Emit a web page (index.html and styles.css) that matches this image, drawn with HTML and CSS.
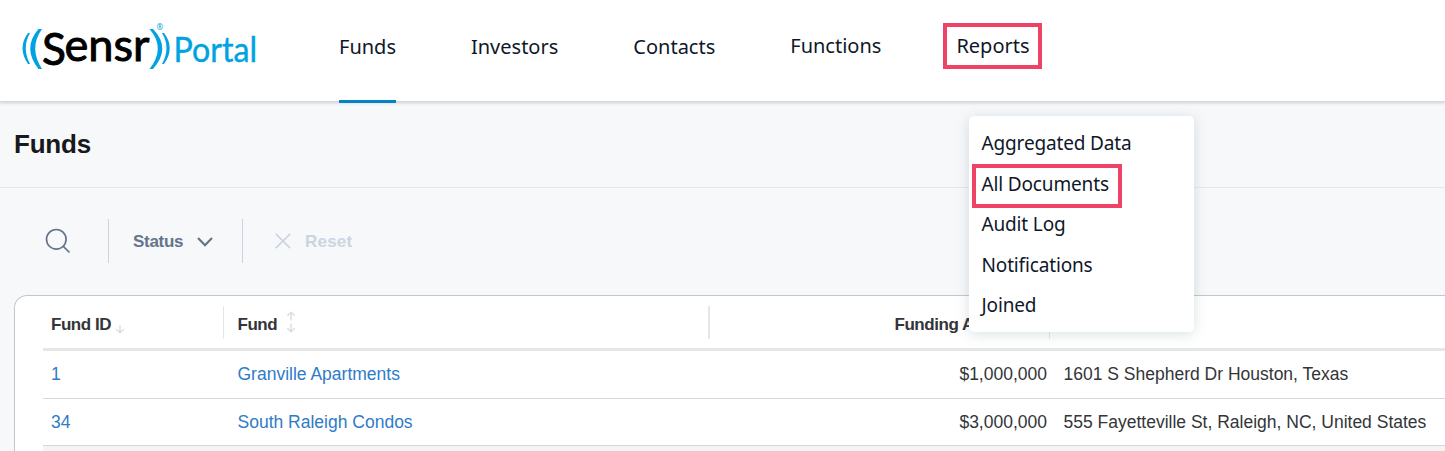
FILE: index.html
```
<!DOCTYPE html>
<html lang="en">
<head>
    <meta charset="UTF-8">
    <title>Sensr Portal - Funds</title>
    <link rel="stylesheet" href="styles.css">
</head>
<body>
    <header class="header">
        <a class="logo">
            <svg width="260" height="60" viewBox="0 0 260 60">
                <g fill="#00a3e0">
                    <path d="M8 18 Q-3 33 8 49 L10 49 Q1.500 33 10 18 Z"/>
                    <path d="M18.500 14 Q2 33 18.500 54 L22 54 Q8.500 33 22 14 Z"/>
                    <path d="M129.500 14 Q146 33 129.500 54 L133 54 Q151.500 33 133 14 Z"/>
                    <path d="M142 18 Q151 33 142 49 L144 49 Q155.500 33 144 18 Z"/>
                </g>
                <text class="logo-name" x="22" y="49.500" textLength="24" lengthAdjust="spacingAndGlyphs" font-size="45">S</text>
                <text class="logo-name" x="44.500" y="46" textLength="85" lengthAdjust="spacingAndGlyphs" font-size="45">ensr</text>
                <text class="logo-mark" x="136.500" y="15">®</text>
                <text class="logo-portal" x="153.500" y="46.500" textLength="83.500" lengthAdjust="spacingAndGlyphs">Portal</text>
            </svg>
        </a>
        <nav class="nav">
            <a class="nav-item active">Funds</a>
            <a class="nav-item">Investors</a>
            <a class="nav-item">Contacts</a>
            <a class="nav-item raised">Functions</a>
            <a class="nav-item raised marked">Reports</a>
        </nav>
        <div class="menu">
            <a class="menu-item">Aggregated Data</a>
            <a class="menu-item marked">All Documents</a>
            <a class="menu-item">Audit Log</a>
            <a class="menu-item">Notifications</a>
            <a class="menu-item">Joined</a>
        </div>
    </header>
    <div class="title-bar">
        <h1>Funds</h1>
    </div>
    <div class="filters">
        <div class="filter-search">
            <svg width="26" height="26" viewBox="0 0 26 26" fill="none" stroke="#64748b" stroke-width="1.700">
                <circle cx="11.300" cy="11.300" r="9.800"/>
                <path d="M18.300 18.300 L24.500 24.500"/>
            </svg>
        </div>
        <div class="filter-status">
            <span>Status</span>
            <svg width="16" height="10" viewBox="0 0 16 10" fill="none" stroke="#64748b" stroke-width="2.200">
                <path d="M1 1 L8 8.200 L15 1"/>
            </svg>
        </div>
        <div class="filter-reset">
            <svg width="16" height="16" viewBox="0 0 16 16" fill="none" stroke="#cbd5e1" stroke-width="1.700">
                <path d="M.8 .8 L15.200 15.200 M15.200 .8 L.8 15.200"/>
            </svg>
            <span>Reset</span>
        </div>
    </div>
    <div class="card">
        <div class="row head">
            <div class="cell">
                <span>Fund ID</span>
                <svg class="sort-down" width="10" height="9" viewBox="0 0 10 9" fill="none" stroke="#dedede" stroke-width="1.500">
                    <path d="M5 0 V7.500 M1.300 4.200 L5 7.700 L8.700 4.200"/>
                </svg>
            </div>
            <div class="cell">
                <span>Fund</span>
                <svg class="sort-both" width="10" height="22" viewBox="0 0 10 22" fill="none" stroke="#dedede" stroke-width="1.500">
                    <path d="M5 9.500 V1.500 M1.300 4.800 L5 1.200 L8.700 4.800"/>
                    <path d="M5 12.500 V20.500 M1.300 17.200 L5 20.800 L8.700 17.200"/>
                </svg>
            </div>
            <div class="cell amount"><span>Funding Amount</span></div>
            <div class="cell"></div>
        </div>
        <div class="row">
            <div class="cell link">1</div>
            <div class="cell link">Granville Apartments</div>
            <div class="cell amount">$1,000,000</div>
            <div class="cell">1601 S Shepherd Dr Houston, Texas</div>
        </div>
        <div class="row last">
            <div class="cell link">34</div>
            <div class="cell link">South Raleigh Condos</div>
            <div class="cell amount">$3,000,000</div>
            <div class="cell">555 Fayetteville St, Raleigh, NC, United States</div>
        </div>
        <div class="row next"></div>
    </div>
</body>
</html>
```
FILE: styles.css
```
*, *::after {
    box-sizing: border-box;
}
body {
    margin: 0;
    height: 451px;
    overflow: hidden;
    background: #f7f8fa;
    color: #333538;
    font-family: "Liberation Sans", Arial, sans-serif;
    font-size: 17.500px;
}
.header {
    position: relative;
    z-index: 2;
    display: flex;
    height: 101px;
    padding-left: 20px;
    background: #fff;
    box-shadow: 0 1px 3px 1px rgba(60, 75, 65, .22);
}
.logo {
    width: 319px;
    padding-top: 15px;
}
.logo-name {
    fill: #000;
    stroke: #000;
    stroke-width: .9;
    font-family: Lato, sans-serif;
}
.logo-mark {
    fill: #00a3e0;
    font-family: "Noto Sans", sans-serif;
    font-size: 8px;
}
.logo-portal {
    fill: #00a3e0;
    stroke: #00a3e0;
    stroke-width: .4;
    font-family: Lato, sans-serif;
    font-size: 34px;
}
.nav {
    display: flex;
    gap: 75px;
    height: 103px;
}
.nav-item {
    position: relative;
    padding-top: 33px;
    color: #0f172a;
    font-family: "Noto Sans", sans-serif;
    font-size: 20px;
    line-height: 27px;
}
.nav-item.active {
    border-bottom: 3px solid #0284c7;
}
.nav-item.raised {
    padding-top: 32px;
}
.marked::after {
    content: "";
    position: absolute;
    border: 4px solid #ee4266;
}
.nav-item.marked::after {
    left: -13px;
    right: -12px;
    top: 23px;
    height: 46px;
}
.menu {
    position: absolute;
    left: 969px;
    top: 116px;
    width: 225px;
    height: 216px;
    padding: 7px 12.500px;
    border-radius: 5px;
    background: #fff;
    box-shadow: 0 2px 14px rgba(50, 90, 90, .18);
}
.menu-item {
    position: relative;
    display: block;
    width: max-content;
    color: #0f172a;
    font-family: "Noto Sans", sans-serif;
    font-size: 19px;
    letter-spacing: -.150px;
    line-height: 40.500px;
}
.menu-item.marked::after {
    left: -9.500px;
    right: -13px;
    top: 0;
    height: 44px;
}
.title-bar {
    display: flex;
    align-items: center;
    height: 87px;
    padding-left: 14px;
    border-bottom: 1px solid #e5e7eb;
}
h1 {
    margin: 0;
    color: #18191c;
    font-size: 26px;
    letter-spacing: -.200px;
}
.filters {
    display: flex;
    align-items: center;
    height: 105px;
    margin-bottom: 2px;
    color: #64748b;
    font-size: 17px;
    font-weight: bold;
}
.filters > div {
    display: flex;
    align-items: center;
    height: 44px;
}
.filters span {
    padding-top: 2px;
}
.filter-search {
    width: 109px;
    padding-left: 45px;
    border-right: 1px solid #cbd5e1;
}
.filter-status {
    gap: 14px;
    width: 134px;
    padding-left: 24px;
    border-right: 1px solid #cbd5e1;
    letter-spacing: -.300px;
}
.filter-status svg {
    margin-top: 2px;
}
.filter-reset {
    gap: 14px;
    padding-left: 32px;
    color: #cbd5e1;
    letter-spacing: .200px;
}
.card {
    width: 1460px;
    height: 156px;
    margin-left: 14px;
    padding-left: 28px;
    border: 1px solid #c3c7cc;
    border-bottom: 0;
    border-radius: 13px 0 0 0;
    background: #fff;
}
.row {
    display: grid;
    grid-template-columns: 181px 486px 340px 1fr;
    align-items: center;
    height: 48px;
    border-bottom: 1px solid #d3d9d8;
}
.row.head {
    height: 55px;
    border-bottom: 3px solid #e5e6e6;
    font-size: 17px;
    font-weight: bold;
    letter-spacing: -.450px;
}
.row.last {
    height: 47px;
    padding-top: 1px;
}
.row.next {
    height: 5px;
    border: 0;
    background: #f3f4f4;
}
.cell {
    padding-left: 8px;
    white-space: nowrap;
}
.cell + .cell {
    padding-left: 13.500px;
}
.head .cell {
    display: flex;
    align-items: center;
    height: 33px;
    border-right: 1px solid #e5e6e6;
}
.head .cell span {
    padding-top: 6px;
}
.head .cell:nth-child(2) {
    border-right-width: 2px;
}
.head .cell:last-child {
    border: 0;
}
.sort-down {
    margin: 14px 0 0 4px;
}
.sort-both {
    margin: 0 0 0 9px;
}
.cell.amount {
    padding-right: 3px;
    text-align: right;
}
.head .cell.amount {
    padding-left: 184.500px;
}
.link {
    color: #2f7bc8;
}
```
